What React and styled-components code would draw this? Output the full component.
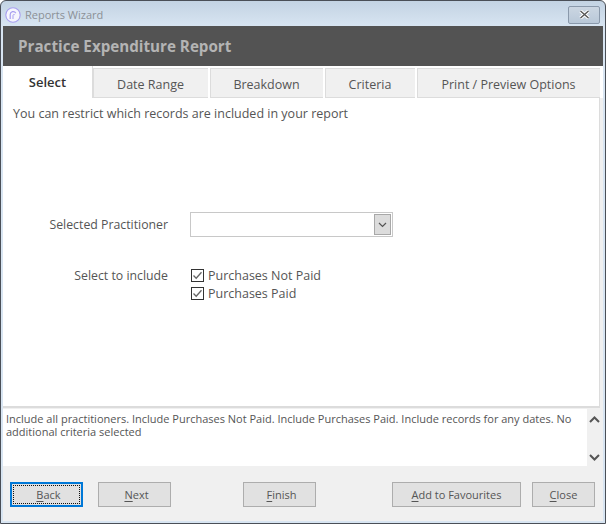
import React from "react";
import styled, { createGlobalStyle } from "styled-components";

const Global = createGlobalStyle`
  html, body { margin: 0; padding: 0; background: #fff; }
  body { font-family: "Open Sans", "Noto Sans", sans-serif; }
  * { box-sizing: border-box; }
`;

const Window = styled.div`
  width: 606px;
  height: 524px;
  display: flex;
  flex-direction: column;
  border: 1px solid #4a4f57;
  border-radius: 6px 6px 0 0;
  background: linear-gradient(#c3d3e3, #d8e5f2 26px);
  padding: 0 2px 2px;
  overflow: hidden;
`;

const TitleBar = styled.div`
  height: 25px;
  flex: none;
  display: flex;
  align-items: center;
  justify-content: space-between;
  padding: 0 3px 0 2px;
`;

const TitleLeft = styled.div`
  display: flex;
  align-items: center;
  gap: 4px;
  margin-top: 2px;
  font-size: 11px;
  color: #8b9096;
`;

const CloseBox = styled.div`
  width: 32px;
  height: 18px;
  margin-top: 2px;
  border: 1px solid #8a99ab;
  border-radius: 2px;
  background: linear-gradient(#cbd6e2, #b9c8d8);
  display: flex;
  align-items: center;
  justify-content: center;
`;

const Panel = styled.div`
  flex: 1;
  display: flex;
  flex-direction: column;
  background: #f0f0f0;
  min-height: 0;
`;

const Header = styled.div`
  height: 40px;
  flex: none;
  background: #535353;
  color: #b4b4b4;
  font-size: 15.2px;
  font-weight: 700;
  line-height: 40px;
  padding-left: 15px;
`;

const Tabs = styled.div`
  height: 32px;
  flex: none;
  display: flex;
  background: #fff;
`;

const Tab = styled.div`
  width: ${(p) => p.$w}px;
  flex: none;
  display: flex;
  align-items: center;
  justify-content: center;
  font-size: 12.5px;
  color: #555;
  background: #f0f0f0;
  margin-top: 2px;
  margin-right: 2px;
  border: 1px solid #dcdcdc;
  border-width: 1px 0 1px 1px;
  padding: 2px 1px 0 0;

  ${(p) =>
    p.$active &&
    `
    background: #fff;
    color: #333;
    font-weight: 600;
    font-size: 13px;
    margin: 0;
    border: 0;
    border-right: 1px solid #dcdcdc;
    padding: 0;
  `}
`;

const Content = styled.div`
  height: 310px;
  flex: none;
  width: 597px;
  background: #fff;
  border: 1px solid #dcdcdc;
  border-width: 0 1px 2px 0;
  padding: 7px 10px;
  display: flex;
  flex-direction: column;
  color: #555;
  font-size: 12.5px;
`;

const Intro = styled.div`
  height: 18px;
  line-height: 18px;
`;

const FormRow = styled.div`
  display: grid;
  grid-template-columns: 155px 1fr;
  column-gap: 22px;
  align-items: ${(p) => (p.$top ? "start" : "center")};
  margin-top: ${(p) => p.$mt}px;
`;

const FieldLabel = styled.div`
  text-align: right;
  line-height: 18px;
  font-size: 12.3px;
  padding: 1px 0 0 0;
`;

const Select = styled.div`
  width: 203px;
  height: 25px;
  border: 1px solid #c8c8c8;
  background: #fff;
  display: flex;
  justify-content: flex-end;
  padding: 1px;
`;

const SelectButton = styled.div`
  width: 17px;
  background: #dcdcdc;
  border: 1px solid #a8a8a8;
  display: flex;
  align-items: center;
  justify-content: center;
`;

const CheckList = styled.div`
  display: flex;
  flex-direction: column;
`;

const CheckRow = styled.div`
  height: 18px;
  display: flex;
  align-items: center;
  gap: 4px;
  padding-left: 1px;
`;

const CheckBox = styled.div`
  width: 13px;
  height: 13px;
  border: 1px solid #333;
  background: #fff;
  display: flex;
  align-items: center;
  justify-content: center;
`;

const Info = styled.div`
  height: 57px;
  flex: none;
  margin-top: 1px;
  display: flex;
  font-size: 11px;
  line-height: 13px;
  color: #555;
`;

const InfoText = styled.div`
  flex: 1;
  background: #fff;
  padding: 3px 3px 0;
`;

const ScrollBar = styled.div`
  width: 15px;
  flex: none;
  margin-right: 1px;
  display: flex;
  flex-direction: column;
  justify-content: space-between;
  align-items: center;
  padding: 7px 0 5px;
`;

const Footer = styled.div`
  flex: 1;
  display: flex;
  align-items: flex-start;
  padding: 16px 8px 0 7px;
`;

const Button = styled.div`
  width: ${(p) => p.$w}px;
  height: 25px;
  margin-left: ${(p) => p.$ml || 0}px;
  padding-left: ${(p) => p.$pl || 0}px;
  flex: none;
  display: flex;
  align-items: center;
  justify-content: center;
  background: #e1e1e1;
  border: 1px solid #adadad;
  font-size: 11px;
  color: #555;
  position: relative;

  ${(p) =>
    p.$focused &&
    `
    border: 2px solid #0078d7;
    &::after {
      content: "";
      position: absolute;
      inset: 1px;
      border: 1px dotted #111;
    }
  `}

  u {
    text-underline-offset: 2px;
  }
`;

const Chevron = ({ up }) => (
  <svg width="11" height="7" viewBox="0 0 11 7">
    <path
      d={up ? "M1 6 L5.5 1.5 L10 6" : "M1 1 L5.5 5.5 L10 1"}
      fill="none"
      stroke="#555"
      strokeWidth="2"
    />
  </svg>
);

const AppIcon = () => (
  <svg width="16" height="16" viewBox="0 0 16 16">
    <circle cx="8" cy="8" r="7.2" fill="#f6f6fd" stroke="#a89ff0" strokeWidth="1.1" />
    <path d="M5.2 12 V7.5 a3 3 0 0 1 5.6 -1.4" fill="none" stroke="#a89ff0" strokeWidth="1.2" />
    <path d="M8 12 V8.4 a1 1 0 0 1 1.8 -0.5" fill="none" stroke="#a89ff0" strokeWidth="1" />
  </svg>
);

const Check = () => (
  <svg width="11" height="11" viewBox="0 0 11 11">
    <path d="M1.5 5.5 L4.2 8.3 L9.5 2.2" fill="none" stroke="#666" strokeWidth="1.3" />
  </svg>
);

const App = () => {
  const tabs = [
    { label: "Select", w: 90, active: true },
    { label: "Date Range", w: 115 },
    { label: "Breakdown", w: 113 },
    { label: "Criteria", w: 90 },
    { label: "Print / Preview Options", w: 183 },
  ];

  return (
    <>
      <Global />
      <Window>
        <TitleBar>
          <TitleLeft>
            <AppIcon />
            Reports Wizard
          </TitleLeft>
          <CloseBox>
            <svg width="11" height="9" viewBox="0 0 11 9">
              <path d="M1.5 1 L9.5 8 M9.5 1 L1.5 8" stroke="#fff" strokeWidth="3.4" />
              <path d="M1.5 1 L9.5 8 M9.5 1 L1.5 8" stroke="#555" strokeWidth="1.4" />
            </svg>
          </CloseBox>
        </TitleBar>
        <Panel>
          <Header>Practice Expenditure Report</Header>
          <Tabs>
            {tabs.map((t) => (
              <Tab key={t.label} $w={t.w} $active={t.active}>
                {t.label}
              </Tab>
            ))}
          </Tabs>
          <Content>
            <Intro>You can restrict which records are included in your report</Intro>
            <FormRow $mt={89}>
              <FieldLabel>Selected Practitioner</FieldLabel>
              <Select>
                <SelectButton>
                  <svg width="9" height="6" viewBox="0 0 9 6">
                    <path d="M1 1 L4.5 4.5 L8 1" fill="none" stroke="#555" strokeWidth="1.2" />
                  </svg>
                </SelectButton>
              </Select>
            </FormRow>
            <FormRow $mt={29} $top>
              <FieldLabel>Select to include</FieldLabel>
              <CheckList>
                <CheckRow>
                  <CheckBox>
                    <Check />
                  </CheckBox>
                  Purchases Not Paid
                </CheckRow>
                <CheckRow>
                  <CheckBox>
                    <Check />
                  </CheckBox>
                  Purchases Paid
                </CheckRow>
              </CheckList>
            </FormRow>
          </Content>
          <Info>
            <InfoText>
              Include all practitioners. Include Purchases Not Paid. Include Purchases Paid. Include
              records for any dates. No additional criteria selected
            </InfoText>
            <ScrollBar>
              <Chevron up />
              <Chevron />
            </ScrollBar>
          </Info>
          <Footer>
            <Button $w={73} $pl={4} $focused>
              <span>
                <u>B</u>ack
              </span>
            </Button>
            <Button $w={73} $pl={4} $ml={15}>
              <span>
                <u>N</u>ext
              </span>
            </Button>
            <Button $w={73} $pl={4} $ml={72}>
              <span>
                <u>F</u>inish
              </span>
            </Button>
            <Button $w={129} $ml={76}>
              <span>
                <u>A</u>dd to Favourites
              </span>
            </Button>
            <Button $w={63} $ml={11}>
              <span>
                <u>C</u>lose
              </span>
            </Button>
          </Footer>
        </Panel>
      </Window>
    </>
  );
};

export default App;
